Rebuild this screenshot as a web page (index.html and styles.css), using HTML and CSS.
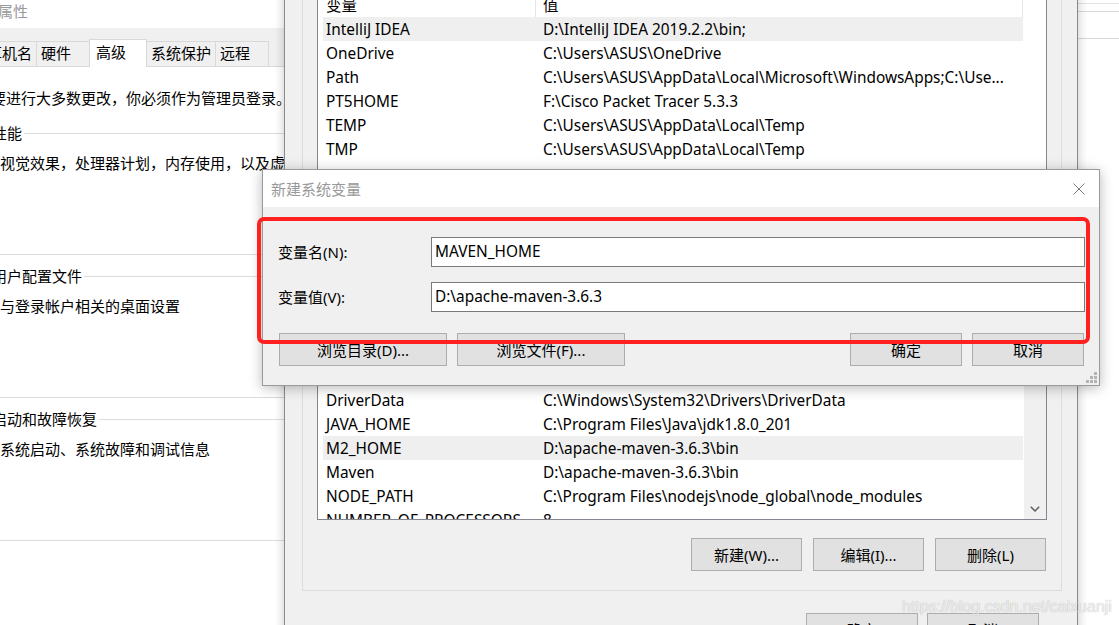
FILE: index.html
```html
<!DOCTYPE html>

<html>

<head>

    <title>新建系统变量</title>

    <meta charset="utf-8">

    <link rel="stylesheet" href="styles.css">

</head>

<body>

    <div id="desktop">

        <!-- window far behind, only its edge shows on the right -->
        <div class="win far">
            <div class="far-rule"></div>
            <div class="far-rule"></div>
            <div class="far-rule"></div>
        </div>

        <div class="win sysprop">
            <div class="titlebar">
                <span class="title">系统属性</span>
            </div>
            <div class="sysprop-body">
                <div class="tabs">
                    <span class="tab">计算机名</span>
                    <span class="tab">硬件</span>
                    <span class="tab active">高级</span>
                    <span class="tab">系统保护</span>
                    <span class="tab">远程</span>
                </div>
                <div class="tab-page">
                    <p class="intro">要进行大多数更改，你必须作为管理员登录。</p>
                    <div class="group">
                        <div class="group-head"><span>性能</span></div>
                        <p>视觉效果，处理器计划，内存使用，以及虚拟内存</p>
                    </div>
                    <div class="group">
                        <div class="group-head"><span>用户配置文件</span></div>
                        <p>与登录帐户相关的桌面设置</p>
                    </div>
                    <div class="group">
                        <div class="group-head"><span>启动和故障恢复</span></div>
                        <p>系统启动、系统故障和调试信息</p>
                    </div>
                </div>
            </div>
        </div>

        <div class="win envvars">
            <div class="titlebar">
                <span class="title">环境变量</span>
            </div>
            <div class="env-body">

                <div class="group env-group">
                    <div class="group-head"><span>ASUS 的用户变量(U)</span></div>
                    <div class="list user">
                        <div class="list-cols">
                            <div class="row head"><span class="cell name">变量</span><span class="cell value">值</span></div>
                            <div class="row selected"><span class="cell name">IntelliJ IDEA</span><span class="cell value">D:\IntelliJ IDEA 2019.2.2\bin;</span></div>
                            <div class="row"><span class="cell name">OneDrive</span><span class="cell value">C:\Users\ASUS\OneDrive</span></div>
                            <div class="row"><span class="cell name">Path</span><span class="cell value">C:\Users\ASUS\AppData\Local\Microsoft\WindowsApps;C:\Use...</span></div>
                            <div class="row"><span class="cell name">PT5HOME</span><span class="cell value">F:\Cisco Packet Tracer 5.3.3</span></div>
                            <div class="row"><span class="cell name">TEMP</span><span class="cell value">C:\Users\ASUS\AppData\Local\Temp</span></div>
                            <div class="row"><span class="cell name">TMP</span><span class="cell value">C:\Users\ASUS\AppData\Local\Temp</span></div>
                        </div>
                    </div>
                    <div class="btn-row">
                        <button class="btn">新建(N)...</button>
                        <button class="btn">编辑(E)...</button>
                        <button class="btn">删除(D)</button>
                    </div>
                </div>

                <!-- system variables: its title and header lie under the dialog -->
                <div class="group env-group system">
                    <div class="list system">
                        <div class="list-cols">
                            <div class="row"><span class="cell name">ComSpec</span><span class="cell value">C:\Windows\system32\cmd.exe</span></div>
                            <div class="row"><span class="cell name">DriverData</span><span class="cell value">C:\Windows\System32\Drivers\DriverData</span></div>
                            <div class="row"><span class="cell name">JAVA_HOME</span><span class="cell value">C:\Program Files\Java\jdk1.8.0_201</span></div>
                            <div class="row selected"><span class="cell name">M2_HOME</span><span class="cell value">D:\apache-maven-3.6.3\bin</span></div>
                            <div class="row"><span class="cell name">Maven</span><span class="cell value">D:\apache-maven-3.6.3\bin</span></div>
                            <div class="row"><span class="cell name">NODE_PATH</span><span class="cell value">C:\Program Files\nodejs\node_global\node_modules</span></div>
                            <div class="row"><span class="cell name">NUMBER_OF_PROCESSORS</span><span class="cell value">8</span></div>
                        </div>
                        <div class="scrollbar">
                            <span class="sb-down">
                                <svg width="10" height="6" viewBox="0 0 10 6"><polyline points="0.8,0.8 5,5 9.2,0.8" fill="none" stroke="#606060" stroke-width="1.5"/></svg>
                            </span>
                        </div>
                    </div>
                    <div class="btn-row">
                        <button class="btn">新建(W)...</button>
                        <button class="btn">编辑(I)...</button>
                        <button class="btn">删除(L)</button>
                    </div>
                </div>

                <div class="btn-row footer">
                    <button class="btn">确定</button>
                    <button class="btn">取消</button>
                </div>

            </div>
        </div>

        <div class="win dialog">
            <div class="titlebar">
                <span class="title">新建系统变量</span>
                <span class="close">
                    <svg width="12" height="12" viewBox="0 0 12 12"><path d="M0.5 0.5 L11.5 11.5 M11.5 0.5 L0.5 11.5" stroke="#7a7a7a" stroke-width="1"/></svg>
                </span>
            </div>
            <div class="dlg-body">
                <div class="field">
                    <label>变量名(N):</label>
                    <div class="edit">MAVEN_HOME</div>
                </div>
                <div class="field">
                    <label>变量值(V):</label>
                    <div class="edit">D:\apache-maven-3.6.3</div>
                </div>
                <div class="dlg-buttons">
                    <button class="btn wide">浏览目录(D)...</button>
                    <button class="btn wide">浏览文件(F)...</button>
                    <span class="spacer"></span>
                    <button class="btn">确定</button>
                    <button class="btn">取消</button>
                </div>
            </div>
            <svg class="grip" width="11" height="11" viewBox="0 0 11 11">
                <rect x="8" y="0" width="3" height="3" fill="#b4b4b4"/>
                <rect x="4" y="4" width="3" height="3" fill="#b4b4b4"/>
                <rect x="8" y="4" width="3" height="3" fill="#b4b4b4"/>
                <rect x="0" y="8" width="3" height="3" fill="#b4b4b4"/>
                <rect x="4" y="8" width="3" height="3" fill="#b4b4b4"/>
                <rect x="8" y="8" width="3" height="3" fill="#b4b4b4"/>
            </svg>
        </div>

        <div class="annot"></div>

        <div class="watermark">https://blog.csdn.net/caixuanji</div>

    </div>

</body>

</html>
```

FILE: styles.css
```css
* {
    margin: 0;
    padding: 0;
    box-sizing: border-box;
}

html,
body {
    height: 100%;
}

body {
    background: #fff;
    color: #000;
    font-family: "Noto Sans", "Noto Sans CJK SC", sans-serif;
    font-size: 15px;
    line-height: 20px;
    overflow: hidden;
}

#desktop {
    position: relative;
    width: 1119px;
    height: 625px;
    overflow: hidden;
}



/* windows */

.win {
    position: absolute;
    display: flex;
    flex-direction: column;
    background: #f0f0f0;
}

.titlebar {
    display: flex;
    align-items: center;
    flex: none;
    background: #fff;
}

.titlebar .title {
    color: #999;
}

.win.far {
    left: 1040px;
    top: -10px;
    width: 100px;
    height: 60px;
    background: #fff;
}

.far-rule {
    height: 1px;
    background: #e2e2e2;
}

.far-rule:nth-child(1) { margin-top: 13px; }
.far-rule:nth-child(2) { margin-top: 7px; background: #d8d8d8; }
.far-rule:nth-child(3) { margin-top: 26px; background: #d8d8d8; }



/* system properties, behind */

.win.sysprop {
    left: -48px;
    top: -11px;
    width: 360px;
    height: 700px;
    border: 1px solid #aaa;
}

.sysprop .titlebar {
    height: 38px;
    padding: 4px 0 0 15px;
}

.sysprop-body {
    flex: 1;
    display: flex;
    flex-direction: column;
    padding: 11px 11px 0;
}

.tabs {
    display: flex;
    align-items: flex-end;
    padding-left: 3px;
}

.tab {
    height: 25px;
    min-width: 54px;
    padding: 0 4px;
    margin-right: -1px;
    border: 1px solid #d9d9d9;
    border-bottom: none;
    line-height: 23px;
    white-space: nowrap;
}

.tab.active {
    position: relative;
    z-index: 1;
    height: 28px;
    min-width: 58px;
    margin-bottom: -1px;
    padding: 0 6px;
    background: #fff;
    line-height: 25px;
}

.tab-page {
    flex: 1;
    background: #fff;
    border: 1px solid #d9d9d9;
    padding: 21px 10px 0 26px;
    white-space: nowrap;
}

.group {
    border: 1px solid #dcdcdc;
    border-top: none;
}

.group-head {
    display: flex;
    align-items: center;
    height: 20px;
    white-space: nowrap;
}

.group-head::before,
.group-head::after {
    content: "";
    height: 1px;
    background: #dcdcdc;
}

.group-head::before {
    width: 7px;
}

.group-head::after {
    flex: 1;
    margin-left: 2px;
}

.tab-page .group {
    margin: 15px 0 0 -7px;
    padding: 0 0 81px 15px;
}

.tab-page .group + .group {
    margin-top: 11px;
}

.tab-page .group-head {
    margin-left: -15px;
}

.tab-page .group p {
    margin-top: 10px;
}



/* environment variables */

.win.envvars {
    left: 284px;
    top: -82px;
    width: 794px;
    height: 760px;
    border: 1px solid #8a8a8a;
    box-shadow: 0 0 10px rgba(0,0,0,0.22);
}

.envvars .titlebar {
    height: 31px;
    padding-left: 10px;
}

.env-body {
    flex: 1;
    display: flex;
    flex-direction: column;
    padding: 10px 15px 0 17px;
}

.env-group {
    padding: 0 14px 18px;
}

.env-group .group-head {
    margin: 0 -14px;
}

.env-group.system {
    margin-top: 41px;
    padding: 40px 14px 19px;
    border-top: 1px solid #dcdcdc;
}

.list {
    display: flex;
    background: #fff;
    border: 1px solid #828790;
    overflow: hidden;
}

.list.user {
    height: 218px;
    margin-top: 12px;
}

.list.system {
    height: 157px;
}

.list-cols {
    flex: 1;
}

.row {
    display: flex;
    width: 700px;
    height: 24px;
    margin-left: 5px;
    line-height: 24px;
    white-space: nowrap;
}

.row.selected {
    background: #efefef;
}

.cell {
    overflow: hidden;
    padding-top: 1px;
    font-size: 15.4px;
}

.cell.name {
    width: 213px;
    padding-left: 3px;
}

.cell.value {
    width: 487px;
    padding-left: 7px;
}

.row.head .cell {
    border-right: 1px solid #e5e5e5;
}

.scrollbar {
    display: flex;
    flex-direction: column;
    justify-content: flex-end;
    width: 22px;
    background: #f0f0f0;
}

.sb-down {
    display: flex;
    align-items: center;
    justify-content: center;
    height: 20px;
}

.btn-row {
    display: flex;
    justify-content: flex-end;
    gap: 11px;
    margin-top: 19px;
    padding-right: 1px;
}

.list.system + .btn-row {
    margin-top: 18px;
}

.btn-row .btn {
    width: 111px;
}

.btn-row.footer {
    gap: 9px;
    margin-top: 22px;
    padding-right: 23px;
}

.btn-row.footer .btn {
    width: 112px;
}

.btn {
    height: 33px;
    background: #e1e1e1;
    border: 1px solid #adadad;
    color: #000;
    font: inherit;
}



/* new variable dialog */

.win.dialog {
    left: 262px;
    top: 169px;
    width: 838px;
    height: 217px;
    border: 1px solid #9a9a9a;
    box-shadow: 0 2px 12px rgba(0,0,0,0.28);
}

.dialog .titlebar {
    height: 37px;
    padding-left: 8px;
    justify-content: space-between;
}

.close {
    display: flex;
    justify-content: center;
    width: 40px;
}

.dlg-body {
    flex: 1;
    padding: 30px 14px 0 15px;
}

.field {
    display: flex;
    align-items: center;
    height: 30px;
}

.field + .field {
    margin-top: 15px;
}

.field label {
    width: 153px;
}

.edit {
    flex: 1;
    height: 30px;
    padding-left: 3px;
    background: #fff;
    border: 1px solid #7a7a7a;
    font-size: 15.4px;
    line-height: 28px;
}

.dlg-buttons {
    display: flex;
    gap: 10px;
    margin-top: 21px;
    padding: 0 1px;
}

.dlg-buttons .btn {
    width: 112px;
}

.dlg-buttons .btn.wide {
    width: 168px;
}

.spacer {
    flex: 1;
}

.grip {
    position: absolute;
    right: 2px;
    bottom: 2px;
}



/* things drawn over the screenshot */

.annot {
    position: absolute;
    left: 257px;
    top: 217px;
    width: 833px;
    height: 127px;
    border: 4px solid #ff2020;
    border-radius: 7px;
}

.watermark {
    position: absolute;
    left: 902px;
    top: 597px;
    color: rgba(255,255,255,0.8);
    font-family: "Liberation Sans", sans-serif;
    font-size: 16px;
    text-shadow: 0 0 1px rgba(0,0,0,0.35);
}
```
